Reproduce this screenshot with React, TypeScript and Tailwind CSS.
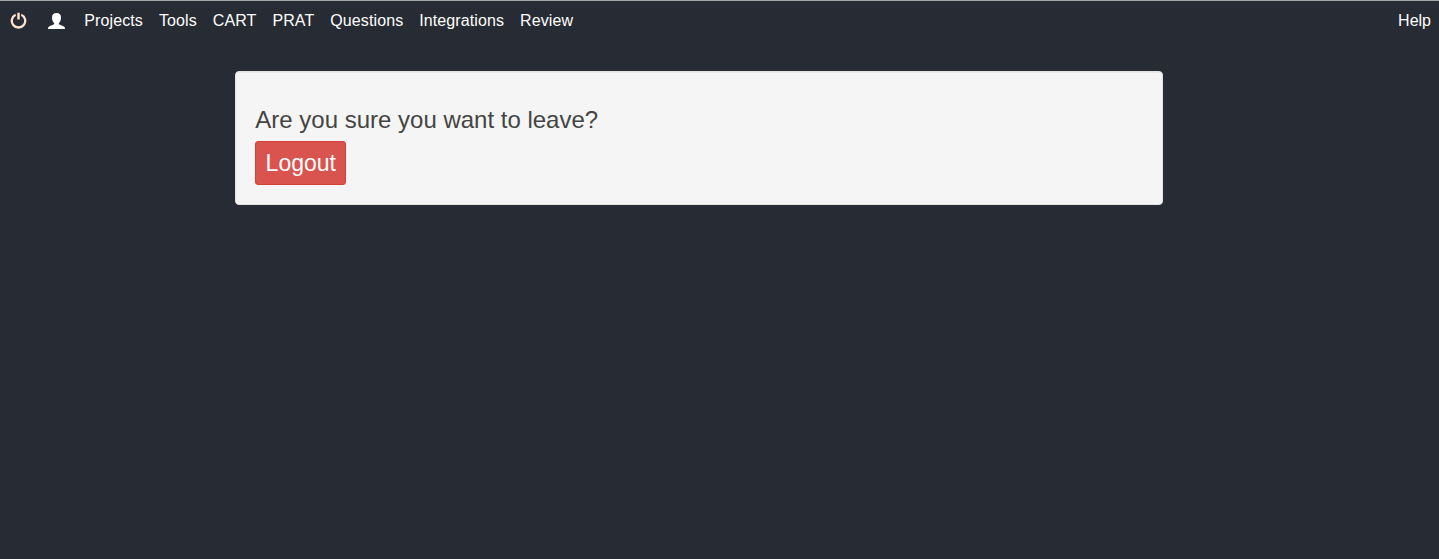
const links = ["Projects", "Tools", "CART", "PRAT", "Questions", "Integrations", "Review"];

function PowerIcon() {
  return (
    <svg className="block h-[17px] w-[17px]" viewBox="0 0 17 17" fill="none" stroke="#fde3d0">
      <path d="M5.700 2.700A6.700 6.700 0 1 0 11.300 2.700" strokeWidth="2.300" />
      <path d="M8.500 0.700V7.500" strokeWidth="2.400" />
    </svg>
  );
}

function UserIcon() {
  return (
    <svg className="block h-4 w-[17px]" viewBox="0 0 17 16" fill="#fff">
      <path d="M8.500 0C5.600 0 4 1.700 4 4.400c0 2.500.8 4.200 1.900 5.400.5.700.3 1.400-.3 1.700L1.500 13.300C.4 13.800 0 14.600 0 16h17c0-1.400-.4-2.200-1.500-2.700L11.400 11.500c-.6-.3-.8-1-.3-1.700C12.200 8.600 13 6.900 13 4.400 13 1.700 11.400 0 8.500 0Z" />
    </svg>
  );
}

export default function App() {
  return (
    <div className="min-h-screen border-t border-[#a5a7aa] bg-[#272b33] font-['Liberation_Sans',Arial,sans-serif]">
      <nav className="flex h-[39px] items-center pr-2 pl-2.5 text-base text-white">
        <a className="mr-[21px]" aria-label="Log out"><PowerIcon /></a>
        <a className="mr-[19.3px]" aria-label="Account"><UserIcon /></a>
        <div className="flex gap-4 tracking-[0.1px]">
          {links.map((label) => (
            <a key={label}>{label}</a>
          ))}
        </div>
        <a className="ml-auto">Help</a>
      </nav>
      <main className="mt-[31px] ml-[235px] h-[134px] w-[928px] rounded border border-[#e3e3e3] bg-[#f5f5f5] px-[19px] pt-[35px] shadow-[inset_0_1px_1px_rgba(0,0,0,0.05)]">
        <h3 className="pl-[0.3px] text-2xl leading-[26px] whitespace-nowrap text-[#444]">Are you sure you want to leave?</h3>
        <button className="mt-2 flex h-11 w-[91px] items-center justify-center rounded-[3px] border border-[#d43f3a] bg-[#d9534f] pl-[0.6px] text-[23px] text-white">
          Logout
        </button>
      </main>
    </div>
  );
}
